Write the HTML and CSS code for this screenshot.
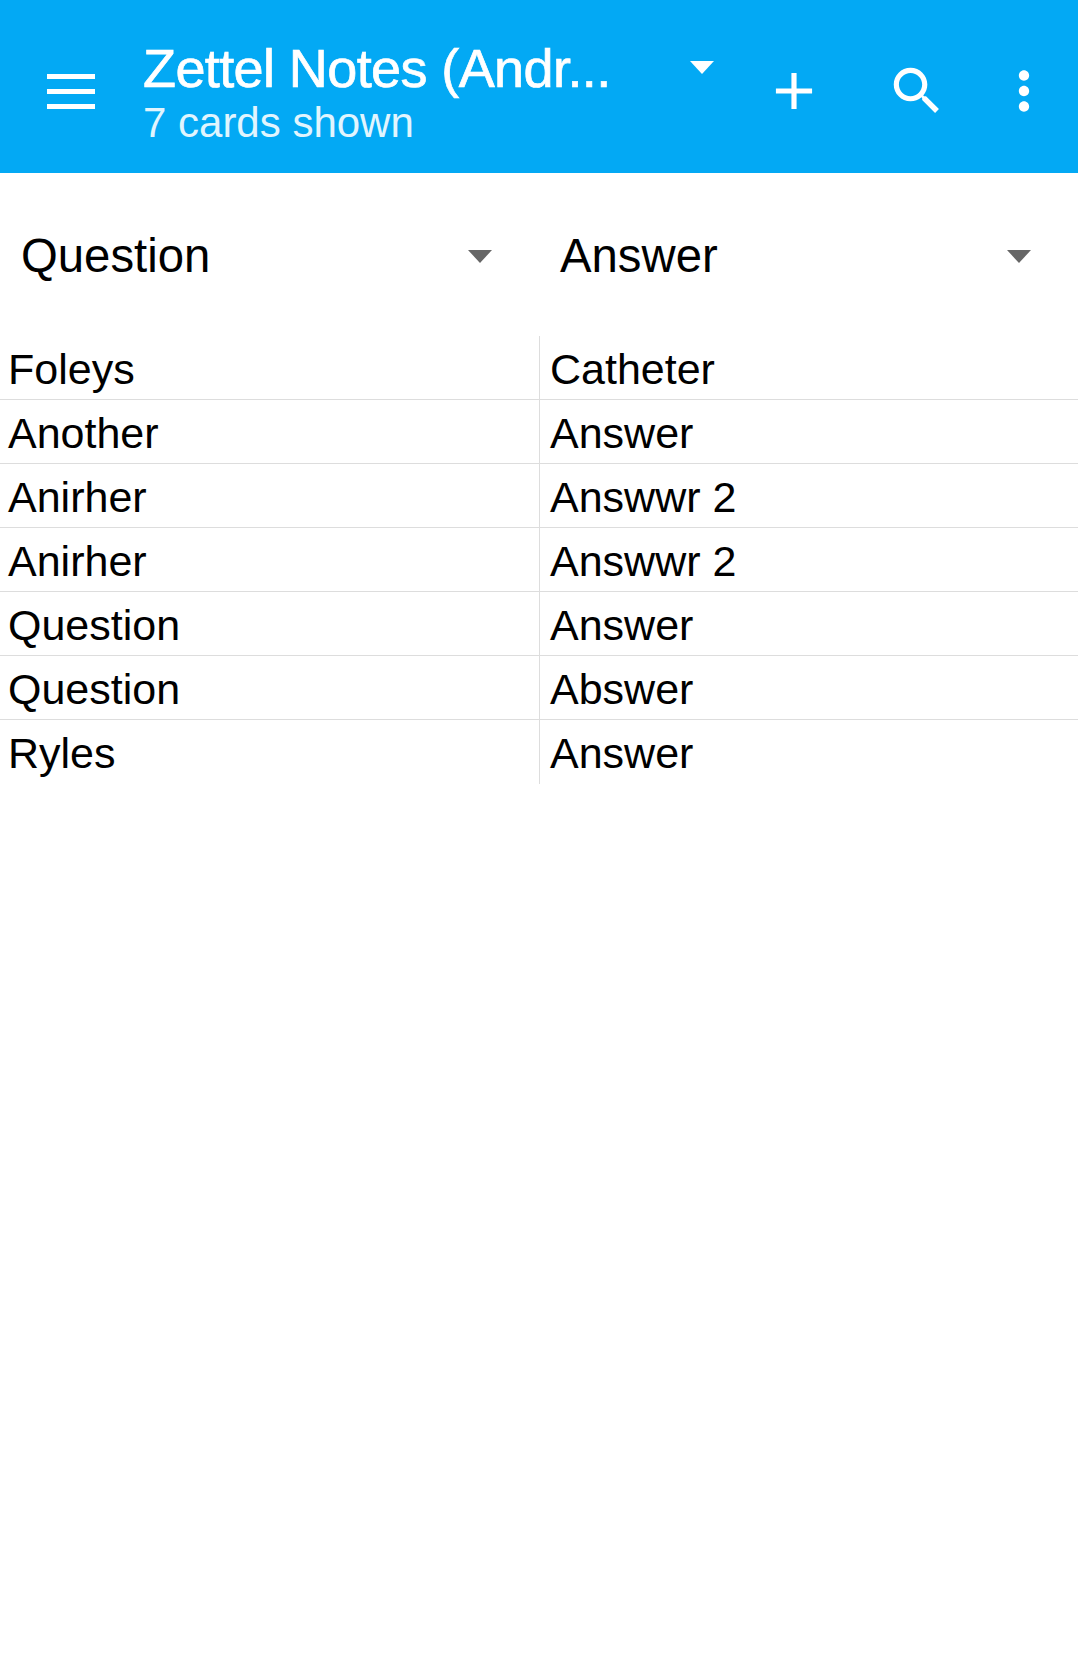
FILE: index.html
```html
<!DOCTYPE html>
<html lang="en">
<head>
    <meta charset="UTF-8">
    <meta name="viewport" content="width=device-width, initial-scale=1.0">
    <title>Zettel Notes</title>
    <link rel="stylesheet" href="styles.css">
</head>
<body>
    <header class="toolbar">
        <svg class="menu-icon" viewBox="0 0 48 35"><rect y="0" width="48" height="5"/><rect y="15" width="48" height="5"/><rect y="30" width="48" height="5"/></svg>
        <div class="deck">
            <div class="deck-name">Zettel Notes (Andr...</div>
            <div class="deck-count">7 cards shown</div>
        </div>
        <span class="caret caret-light"></span>
        <svg class="icon icon-add" viewBox="0 0 24 24"><path d="M19 13h-6v6h-2v-6H5v-2h6V5h2v6h6v2z"/></svg>
        <svg class="icon icon-search" viewBox="0 0 24 24"><path d="M15.5 14h-.79l-.28-.27C15.41 12.59 16 11.11 16 9.5 16 5.91 13.09 3 9.5 3S3 5.91 3 9.5 5.91 16 9.5 16c1.61 0 3.09-.59 4.23-1.57l.27.28v.79l5 4.99L20.49 19l-4.99-5zm-6 0C7.01 14 5 11.99 5 9.5S7.01 5 9.5 5 14 7.01 14 9.5 11.99 14 9.5 14z"/></svg>
        <svg class="icon icon-more" viewBox="0 0 24 24"><path d="M12 8c1.1 0 2-.9 2-2s-.9-2-2-2-2 .9-2 2 .9 2 2 2zm0 2c-1.1 0-2 .9-2 2s.9 2 2 2 2-.9 2-2-.9-2-2-2zm0 6c-1.1 0-2 .9-2 2s.9 2 2 2 2-.9 2-2-.9-2-2-2z"/></svg>
    </header>

    <div class="columns">
        <div class="column-select">
            <span>Question</span>
            <span class="caret caret-dark"></span>
        </div>
        <div class="column-select">
            <span>Answer</span>
            <span class="caret caret-dark"></span>
        </div>
    </div>

    <div class="cards">
        <div class="card"><div class="cell">Foleys</div><div class="cell">Catheter</div></div>
        <div class="card"><div class="cell">Another</div><div class="cell">Answer</div></div>
        <div class="card"><div class="cell">Anirher</div><div class="cell">Answwr 2</div></div>
        <div class="card"><div class="cell">Anirher</div><div class="cell">Answwr 2</div></div>
        <div class="card"><div class="cell">Question</div><div class="cell">Answer</div></div>
        <div class="card"><div class="cell">Question</div><div class="cell">Abswer</div></div>
        <div class="card"><div class="cell">Ryles</div><div class="cell">Answer</div></div>
    </div>
</body>
</html>
```

FILE: styles.css
```css
body {
    margin: 0;
    background: #fff;
    color: #000;
    font-family: "Liberation Sans", Arial, sans-serif;
}

.toolbar {
    display: flex;
    align-items: center;
    box-sizing: border-box;
    height: 173px;
    padding: 9px 0 0 47px;
    background-color: #03a9f4;
    color: #fff;
}

.menu-icon {
    flex: none;
    width: 48px;
    height: 35px;
    fill: #fff;
}

.deck {
    flex: none;
    width: 546px;
    margin: 3px 0 0 48px;
}

.deck-name {
    font-size: 54px;
    line-height: 60px;
    letter-spacing: -0.6px;
    -webkit-text-stroke: 0.7px #fff;
}

.deck-count {
    font-size: 42px;
    line-height: 50px;
    color: #e1f5fe;
}

.caret {
    flex: none;
    width: 0;
    height: 0;
    border-left: 12.5px solid transparent;
    border-right: 12.5px solid transparent;
}

.caret-light {
    margin: -47px 0 0 1px;
    border-top: 13px solid #fff;
}

.caret-dark {
    margin-top: 1px;
    border-top: 13px solid #666;
}

.icon {
    flex: none;
    width: 62px;
    height: 62px;
    fill: #fff;
}

.icon-add {
    margin-left: 49px;
}

.icon-search {
    margin-left: 61px;
}

.icon-more {
    margin-left: 45px;
}

.columns {
    display: grid;
    grid-template-columns: 539px 539px;
    height: 163px;
}

.column-select {
    display: flex;
    align-items: center;
    justify-content: space-between;
    padding: 2px 47px 0 21px;
    font-size: 47.3px;
}

.cards {
    display: flex;
    flex-direction: column;
}

.card {
    display: grid;
    grid-template-columns: 539px 539px;
    height: 64px;
    border-bottom: 1px solid #ddd;
    box-sizing: border-box;
}

.card:last-child {
    border-bottom: none;
}

.cell {
    padding: 8px 0 0 8px;
    font-size: 43px;
    line-height: 50px;
}

.cell + .cell {
    padding-left: 10px;
    border-left: 1px solid #ddd;
}
```
